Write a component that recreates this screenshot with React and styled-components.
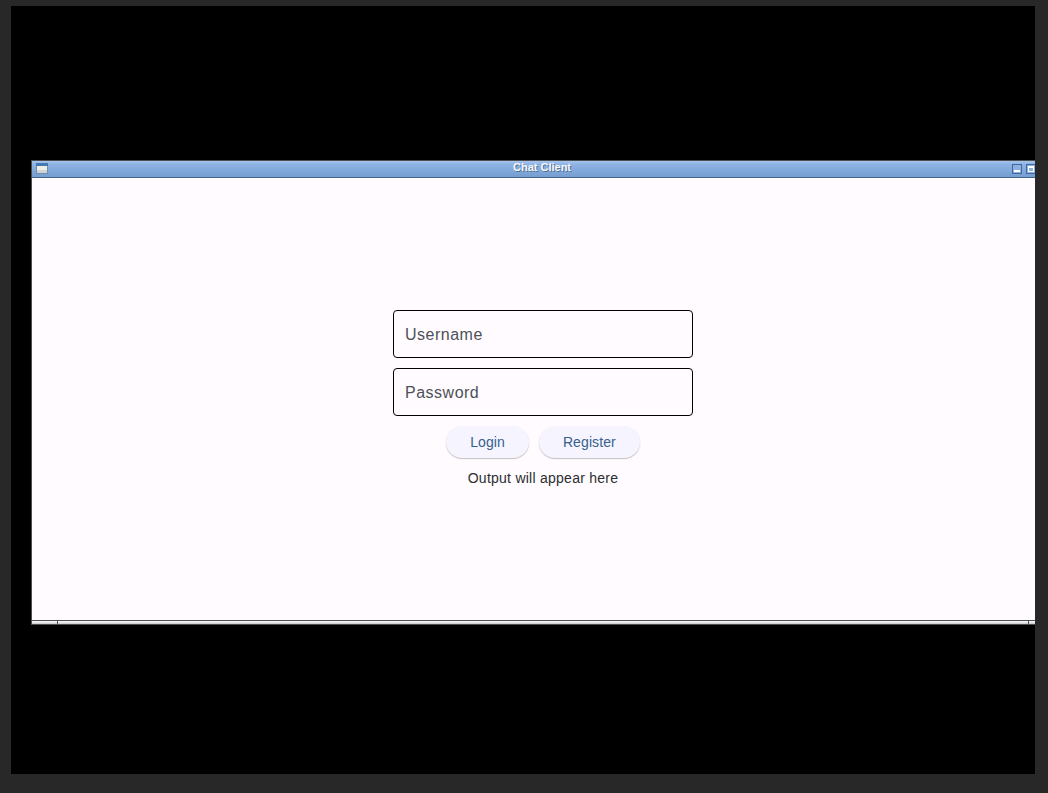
import React from "react";
import styled, { createGlobalStyle } from "styled-components";

const GlobalStyle = createGlobalStyle`
  * { box-sizing: border-box; }
  body { margin: 0; background: #282828; font-family: "Liberation Sans", Arial, sans-serif; }
`;

const Page = styled.main`
  height: 793px;
  padding: 6px 13px 19px 11px;
  overflow: hidden;
  background: #282828;
`;

const Screen = styled.div`
  width: 1024px;
  height: 768px;
  padding: 154px 0 0 20px;
  background: #000;
  overflow: hidden;
`;

const Window = styled.section`
  display: flex;
  flex-direction: column;
  width: 1024px;
  height: 465px;
  border: 1px solid #4f4f52;
`;

const TitleBar = styled.header`
  display: flex;
  flex: none;
  align-items: center;
  height: 17px;
  padding: 0 18px 0 4px;
  border-bottom: 1px solid #416692;
  background: linear-gradient(#a6c6ee 0, #8fb4e4 3px, #759dd0 100%);
`;

const Title = styled.h1`
  flex: 1;
  margin: 0 0 3px;
  padding-left: 24px;
  color: #f6f8fb;
  font-size: 11px;
  font-weight: 700;
  line-height: 13px;
  text-align: center;
  text-shadow: 1px 1px 0 #557399;
`;

const Controls = styled.div`
  display: flex;
  gap: 4px;
`;

const Glyph = styled.svg`
  display: block;
  flex: none;
`;

const Client = styled.div`
  display: flex;
  flex: 1;
  align-items: center;
  justify-content: center;
  background: #fffbff;
`;

const Form = styled.form`
  display: flex;
  flex-direction: column;
  align-items: center;
  gap: 10px;
  width: 300px;
`;

const Field = styled.input`
  width: 300px;
  height: 48px;
  padding: 2px 11px 0;
  border: 1px solid #000;
  border-radius: 4px;
  outline: 0;
  background: transparent;
  font: 16px "Liberation Sans", Arial, sans-serif;
  letter-spacing: 0.5px;
  &::placeholder { color: #4d5158; opacity: 1; }
`;

const Actions = styled.div`
  display: flex;
  gap: 10px;
`;

const Button = styled.button`
  height: 32px;
  padding: 0 24px;
  border: 0;
  border-radius: 16px;
  background: #f6f4fe;
  box-shadow: 0 1px 1px rgba(0, 0, 0, 0.2), 0 1px 2px rgba(0, 0, 0, 0.05);
  color: #36618e;
  font: 14px/20px "Liberation Sans", Arial, sans-serif;
  letter-spacing: 0.1px;
`;

const Output = styled.p`
  margin: 0;
  color: #2b2d30;
  font-size: 14px;
  line-height: 20px;
  letter-spacing: 0.25px;
`;

const ResizeBar = styled.footer`
  display: flex;
  flex: none;
  height: 4px;
  border-top: 1px solid #4f4f52;
`;

const Grip = styled.div`
  width: ${(p) => (p.$fill ? "auto" : p.$end ? "26px" : "25px")};
  flex: ${(p) => (p.$fill ? "1" : "none")};
  background: linear-gradient(#fff, #c6cace);
  & + & { border-left: 1px solid #4f4f52; }
`;

const WindowIcon = () => (
  <Glyph width="12" height="12" viewBox="0 0 12 12" shapeRendering="crispEdges">
    <rect y="1" width="12" height="10" fill="#718cad" />
    <rect width="12" height="3" fill="#4478b0" />
    <rect x="1" y="3" width="10" height="4" fill="#eeeee8" />
    <rect x="1" y="7" width="10" height="3" fill="#d0d4d5" />
  </Glyph>
);

const ControlIcon = ({ maximize }) => (
  <Glyph width="10" height="10" viewBox="0 0 10 10" shapeRendering="crispEdges">
    <rect x="0.5" y="0.5" width="9" height="9" fill="#8db0df" stroke="#4068a0" />
    {maximize ? (
      <path d="M2 2h6v6H2zM3 4v3h4V4z" fill="#fff" fillRule="evenodd" />
    ) : (
      <rect x="2" y="6" width="6" height="2" fill="#fff" />
    )}
  </Glyph>
);

export default function App() {
  return (
    <>
      <GlobalStyle />
      <Page>
        <Screen>
          <Window>
            <TitleBar>
              <WindowIcon />
              <Title>Chat Client</Title>
              <Controls>
                <ControlIcon />
                <ControlIcon maximize />
              </Controls>
            </TitleBar>
            <Client>
              <Form onSubmit={(e) => e.preventDefault()}>
                <Field placeholder="Username" />
                <Field type="password" placeholder="Password" />
                <Actions>
                  <Button>Login</Button>
                  <Button>Register</Button>
                </Actions>
                <Output>Output will appear here</Output>
              </Form>
            </Client>
            <ResizeBar>
              <Grip />
              <Grip $fill />
              <Grip $end />
            </ResizeBar>
          </Window>
        </Screen>
      </Page>
    </>
  );
}
